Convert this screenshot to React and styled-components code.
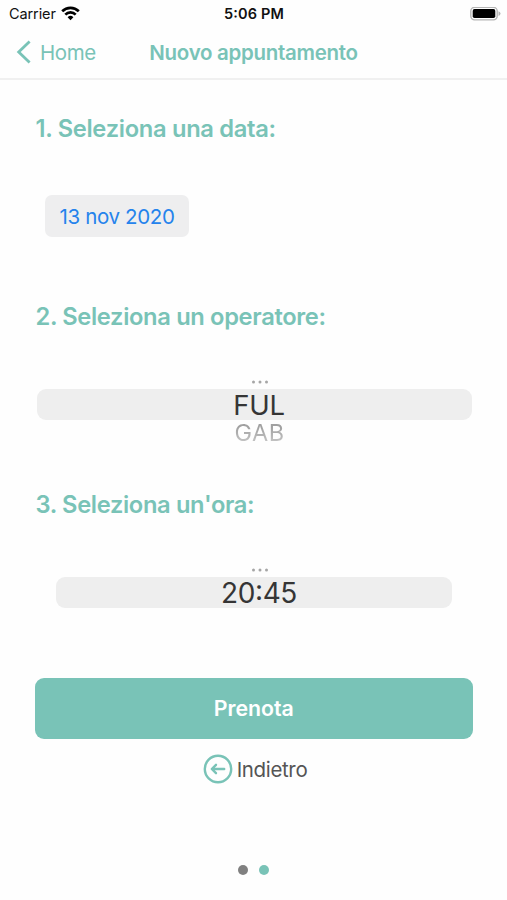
import React from 'react';
import styled, { createGlobalStyle } from 'styled-components';

const GlobalStyle = createGlobalStyle`
  *, *::before, *::after { box-sizing: border-box; }
  body { margin: 0; background: #fff; }
  button { border: 0; padding: 0; margin: 0; background: none; font: inherit; color: inherit; }
`;

const teal = '#79c3b7';

const Screen = styled.div`
  display: flex;
  flex-direction: column;
  width: 507px;
  height: 900px;
  overflow: hidden;
  background: #fefefe;
  font-family: Inter, 'Liberation Sans', sans-serif;
  white-space: nowrap;
`;

const StatusBar = styled.div`
  display: grid;
  grid-template-columns: 1fr auto 1fr;
  align-items: center;
  height: 27px;
  padding: 0 6px 0 9px;
  color: #111;
`;

const Carrier = styled.div`
  display: flex;
  align-items: center;
  gap: 5.5px;
  font-size: 14.5px;
  letter-spacing: -0.1px;
`;

const Clock = styled.div`
  padding-right: 2px;
  font-size: 14.5px;
  font-weight: 600;
  letter-spacing: 0.15px;
  font-feature-settings: 'case';
`;

const Battery = styled.svg`
  justify-self: end;
`;

const NavBar = styled.header`
  display: grid;
  grid-template-columns: 1fr auto 1fr;
  align-items: center;
  height: 53px;
  padding: 0 16px 1px;
  border-bottom: 2px solid #f0f0f0;
  color: ${teal};
`;

const BackLink = styled.button`
  display: flex;
  align-items: center;
  gap: 9px;
  font-size: 20.5px;
  letter-spacing: -0.45px;
`;

const Title = styled.h1`
  margin: 0;
  font-size: 20.5px;
  font-weight: 600;
  letter-spacing: -0.3px;
`;

const Content = styled.main`
  display: flex;
  flex-direction: column;
  padding: 0 34.5px 0 35.5px;
`;

const Section = styled.section`
  height: 188px;
  padding-top: 33px;
`;

const Heading = styled.h2`
  margin: 0;
  height: 30px;
  line-height: 31px;
  font-size: 23.7px;
  font-weight: 600;
  letter-spacing: ${(p) => p.$tracking};
  color: ${teal};
`;

const DateField = styled.button`
  display: block;
  width: 144px;
  height: 42px;
  margin: 52px 0 0 9.5px;
  border-radius: 7px;
  background: #eeeeef;
  color: #2583ec;
  font-size: 20.5px;
  letter-spacing: -0.35px;
`;

const Picker = styled.div`
  display: flex;
  flex-direction: column;
  align-items: center;
  margin: 41px ${(p) => p.$inset}px 0;
`;

const PickerMore = styled.div`
  height: 17px;
  padding: 8px 0 0 11px;
  color: #a6a6a6;
`;

const PickerSelected = styled.div`
  width: 100%;
  height: 31px;
  padding: 1px 0 0 10px;
  border-radius: 9px;
  background: #eee;
  color: #353535;
  font-size: ${(p) => p.$size};
  line-height: 30px;
  letter-spacing: ${(p) => p.$tracking};
  font-feature-settings: 'case';
  text-align: center;
`;

const PickerNext = styled.div`
  height: 28px;
  padding-left: 11px;
  font-size: 23.5px;
  line-height: 26px;
  letter-spacing: 0.5px;
  background: linear-gradient(#a0a0a0 25%, #c8c8c8 85%);
  background-clip: text;
  color: transparent;
`;

const SubmitButton = styled.button`
  height: 61px;
  margin: 34px 0 0 -0.5px;
  padding-bottom: 1px;
  border-radius: 9px;
  background: ${teal};
  color: #fff;
  font-size: 21.3px;
  font-weight: 600;
`;

const ReturnButton = styled.button`
  display: flex;
  align-items: center;
  align-self: center;
  gap: 4px;
  height: 32px;
  margin: 14px 0 0 2px;
  color: #555;
  font-size: 20.5px;
  letter-spacing: -0.35px;
`;

const PageDots = styled.nav`
  display: flex;
  justify-content: center;
  gap: 11px;
  margin: auto 0 25px;
`;

const Dot = styled.span`
  width: 10px;
  height: 10px;
  border-radius: 50%;
  background: ${(p) => (p.$active ? teal : '#808080')};
`;

const MoreDots = () => (
  <svg width="18" height="4" viewBox="0 0 18 4" fill="currentColor" display="block">
    <circle cx="2.5" cy="2" r="1.5" />
    <circle cx="9" cy="2" r="1.5" />
    <circle cx="15.5" cy="2" r="1.5" />
  </svg>
);

export default function App() {
  return (
    <>
      <GlobalStyle />
      <Screen>
        <StatusBar>
          <Carrier>
            Carrier
            <svg width="19" height="15" viewBox="0 0 19 15" fill="none" stroke="#000" strokeWidth="2.7">
              <path d="M1.2 5.2a11.8 11.8 0 0 1 16.6 0" />
              <path d="M4.3 8.6a7.4 7.4 0 0 1 10.4 0" />
              <path d="M9.5 14.2 6.6 11.2a4.2 4.2 0 0 1 5.8 0z" fill="#000" stroke="none" />
            </svg>
          </Carrier>
          <Clock>5:06 PM</Clock>
          <Battery width="31" height="14" viewBox="0 0 31 14">
            <rect x="0.8" y="0.3" width="26.4" height="12.6" rx="3.8" fill="#fff" stroke="#b5b5b5" strokeWidth="1.4" />
            <rect x="2.7" y="2.1" width="22.6" height="9" rx="1.8" fill="#000" />
            <path d="M28.5 4.3q2 .7 2 2.3t-2 2.3z" fill="#b5b5b5" />
          </Battery>
        </StatusBar>
        <NavBar>
          <BackLink>
            <svg width="15" height="24" viewBox="0 0 15 24" fill="none" stroke="currentColor" strokeWidth="2.8">
              <path d="M13.6 1.5 2.7 12l10.9 10.5" />
            </svg>
            Home
          </BackLink>
          <Title>Nuovo appuntamento</Title>
        </NavBar>
        <Content>
          <Section>
            <Heading $tracking="-0.3px">1. Seleziona una data:</Heading>
            <DateField>13 nov 2020</DateField>
          </Section>
          <Section>
            <Heading $tracking="-0.34px">2. Seleziona un operatore:</Heading>
            <Picker $inset={1}>
              <PickerMore><MoreDots /></PickerMore>
              <PickerSelected $size="27.5px" $tracking="-0.3px">FUL</PickerSelected>
              <PickerNext>GAB</PickerNext>
            </Picker>
          </Section>
          <Section>
            <Heading $tracking="-0.34px">3. Seleziona un'ora:</Heading>
            <Picker $inset={20.5}>
              <PickerMore><MoreDots /></PickerMore>
              <PickerSelected $size="28px" $tracking="-0.4px">20:45</PickerSelected>
            </Picker>
          </Section>
          <SubmitButton>Prenota</SubmitButton>
          <ReturnButton>
            <svg width="30" height="30" viewBox="0 0 30 30" fill="none" stroke={teal} strokeWidth="2.4" strokeLinecap="round" strokeLinejoin="round">
              <circle cx="15" cy="15" r="13.2" />
              <path d="M21.2 15H9.2M13 10.8 8.8 15l4.2 4.2" />
            </svg>
            Indietro
          </ReturnButton>
        </Content>
        <PageDots>
          <Dot />
          <Dot $active />
        </PageDots>
      </Screen>
    </>
  );
}
